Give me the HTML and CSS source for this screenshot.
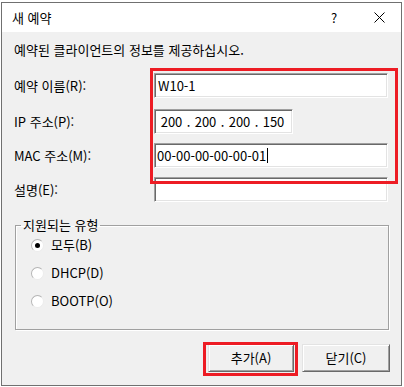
FILE: index.html
```html
<!DOCTYPE html>
<html lang="ko">
<head>
<meta charset="utf-8">
<link rel="stylesheet" href="styles.css">
</head>
<body>
<div class="window">
  <div class="titlebar">
    <span class="title">새 예약</span>
    <span class="help">?</span>
    <span class="close"><svg width="11" height="11" viewBox="0 0 11 11"><path d="M0.5 0.5 L10.5 10.5 M10.5 0.5 L0.5 10.5" stroke="#000" stroke-width="1"/></svg></span>
  </div>
  <div class="content">
    <p class="desc">예약된 클라이언트의 정보를 제공하십시오.</p>
    <div class="form">
      <div class="row">
        <span class="label">예약 이름(R):</span>
        <div class="field">W10-1</div>
      </div>
      <div class="row row-ip">
        <span class="label">IP 주소(P):</span>
        <div class="field field-ip">
          <span class="oct">200</span><span class="dot">.</span><span class="oct">200</span><span class="dot">.</span><span class="oct">200</span><span class="dot">.</span><span class="oct">150</span>
        </div>
      </div>
      <div class="row">
        <span class="label">MAC 주소(M):</span>
        <div class="field field-mac">00-00-00-00-00-01<span class="caret"></span></div>
      </div>
      <div class="row">
        <span class="label">설명(E):</span>
        <div class="field"></div>
      </div>
    </div>
    <fieldset class="group">
      <legend>지원되는 유형</legend>
      <div class="radio"><span class="circle checked"></span><span>모두(B)</span></div>
      <div class="radio"><span class="circle"></span><span>DHCP(D)</span></div>
      <div class="radio"><span class="circle"></span><span>BOOTP(O)</span></div>
    </fieldset>
    <div class="buttons">
      <div class="btn btn-add">추가(A)</div>
      <div class="btn btn-close">닫기(C)</div>
    </div>
  </div>
  <div class="mark mark-fields"></div>
  <div class="mark mark-add"></div>
</div>
</body>
</html>
```
FILE: styles.css
```css
html, body {
  margin: 0;
  padding: 0;
  background: #fff;
}
body {
  font-family: "Noto Sans CJK KR", "Noto Sans", sans-serif;
  font-size: 13px;
  line-height: 16px;
  color: #000;
}
.window {
  position: relative;
  box-sizing: border-box;
  margin: 2px 0 0 1px;
  width: 401px;
  height: 384px;
  border: 1px solid #707070;
  background: #f0f0f0;
  display: flex;
  flex-direction: column;
}
.titlebar {
  height: 29px;
  background: #fff;
  display: flex;
  align-items: center;
  flex: none;
}
.title {
  margin-left: 10px;
  flex: 1;
}
.help {
  width: 12px;
  text-align: center;
  margin-right: 34px;
}
.close {
  display: flex;
  margin-right: 16px;
}
.content {
  padding: 0 12px;
  display: flex;
  flex-direction: column;
}
.desc {
  margin: 10px 0 0 0;
}
.form {
  margin-top: 15px;
  display: flex;
  flex-direction: column;
  gap: 9px;
}
.row {
  display: flex;
  align-items: center;
  height: 25px;
}
.row-ip {
  margin-top: 2px;
}
.label {
  width: 140px;
  flex: none;
}
.field {
  box-sizing: border-box;
  width: 234px;
  height: 25px;
  background: #fff;
  border-style: solid;
  border-width: 1px;
  border-color: #a0a0a0 #fff #fff #a0a0a0;
  box-shadow: inset 1px 1px 0 #696969, inset -1px -1px 0 #e3e3e3;
  padding: 0 3px;
  display: flex;
  align-items: center;
}
.field-ip {
  width: 139px;
  padding-left: 4px;
}
.oct {
  width: 25px;
  text-align: center;
}
.dot {
  width: 9px;
  text-align: center;
}
.field-mac {
  padding-left: 2px;
}
.caret {
  display: inline-block;
  width: 1px;
  height: 15px;
  background: #000;
  margin-left: 1px;
}
.group {
  margin: 15px 0 0 1px;
  padding: 4px 0 20px 0;
  border: 1px solid #a0a0a0;
  box-shadow: 1px 1px 0 #fff, inset 1px 1px 0 #fff;
  display: flex;
  flex-direction: column;
  gap: 12px;
  min-width: 0;
}
.group legend {
  margin-left: 5px;
  padding: 0 2px;
  line-height: 16px;
}
.radio {
  display: flex;
  align-items: center;
  height: 16px;
  padding-left: 15px;
}
.circle {
  position: relative;
  box-sizing: border-box;
  width: 13px;
  height: 13px;
  border-radius: 50%;
  border: 1px solid;
  border-color: #b4b4b4 #ececec #ececec #b4b4b4;
  background: #fff;
  margin-right: 7px;
  flex: none;
}
.circle.checked::after {
  content: "";
  position: absolute;
  left: 3px;
  top: 3px;
  width: 5px;
  height: 5px;
  border-radius: 50%;
  background: #000;
}
.buttons {
  margin-top: 14px;
  display: flex;
  justify-content: flex-end;
  gap: 8px;
  margin-right: -1px;
}
.btn {
  box-sizing: border-box;
  height: 28px;
  display: flex;
  align-items: center;
  justify-content: center;
  background: #f0f0f0;
  border-style: solid;
  border-width: 1px;
  border-color: #e3e3e3 #696969 #696969 #e3e3e3;
  box-shadow: inset 1px 1px 0 #fff, inset -1px -1px 0 #a0a0a0;
}
.btn-add {
  width: 86px;
}
.btn-close {
  width: 88px;
}
.mark {
  position: absolute;
  box-sizing: border-box;
  border: 3px solid #ed1c24;
}
.mark-fields {
  left: 148px;
  top: 65px;
  width: 248px;
  height: 116px;
}
.mark-add {
  left: 201px;
  top: 339px;
  width: 95px;
  height: 34px;
}
```
